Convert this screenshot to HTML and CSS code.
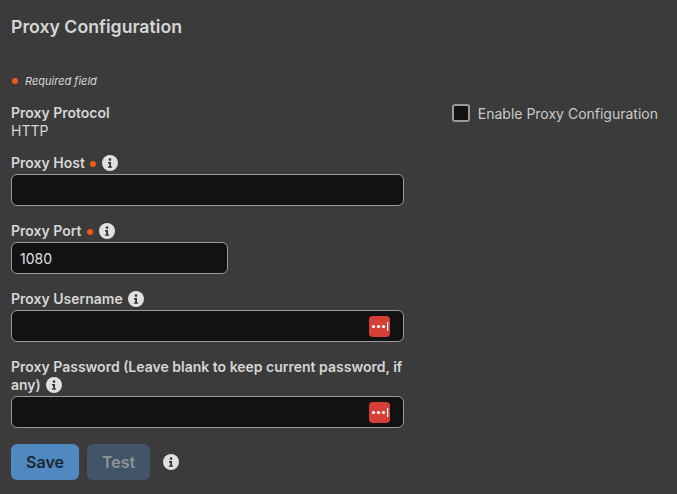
FILE: index.html
```html
<!DOCTYPE html>
<html lang="en">
<head>
    <meta charset="UTF-8">
    <title>Proxy Configuration</title>
    <link rel="stylesheet" href="styles.css">
</head>
<body>
    <svg class="icon-defs" width="0" height="0" aria-hidden="true">
        <symbol id="info" viewBox="0 0 16 16">
            <circle cx="8" cy="8" r="8" fill="#e0e0e0"/>
            <circle cx="8" cy="4.6" r="1.3" fill="#333"/>
            <path d="M6 7h3v4.4h1.1v1.4H5.9v-1.4h1.3V8.4H6z" fill="#333"/>
        </symbol>
        <symbol id="pw" viewBox="0 0 21 21">
            <rect width="21" height="21" rx="4" fill="#d63f35"/>
            <circle cx="4.5" cy="10.5" r="1.6" fill="#fff"/>
            <circle cx="9.5" cy="10.5" r="1.6" fill="#fff"/>
            <circle cx="14.5" cy="10.5" r="1.6" fill="#fff"/>
            <rect x="18" y="6" width="1.2" height="9" fill="#fff"/>
        </symbol>
    </svg>

    <h1 class="title">Proxy Configuration</h1>
    <p class="required-note"><span class="dot"></span><em>Required field</em></p>

    <div class="layout">
        <form class="proxy-form">
            <div class="protocol">
                <div class="label-row">Proxy Protocol</div>
                <div class="protocol-value">HTTP</div>
            </div>

            <div class="field">
                <label class="label-row">Proxy Host <span class="dot dot-label"></span><svg class="info"><use href="#info"/></svg></label>
                <input class="text-input" type="text">
            </div>

            <div class="field">
                <label class="label-row">Proxy Port <span class="dot dot-label"></span><svg class="info"><use href="#info"/></svg></label>
                <input class="text-input port" type="text" value="1080">
            </div>

            <div class="field">
                <label class="label-row">Proxy Username <svg class="info"><use href="#info"/></svg></label>
                <div class="input-wrap">
                    <input class="text-input" type="text">
                    <svg class="pw-badge"><use href="#pw"/></svg>
                </div>
            </div>

            <div class="field">
                <label class="label-row">Proxy Password (Leave blank to keep current password, if any) <svg class="info"><use href="#info"/></svg></label>
                <div class="input-wrap">
                    <input class="text-input" type="password">
                    <svg class="pw-badge"><use href="#pw"/></svg>
                </div>
            </div>

            <div class="actions">
                <button class="btn btn-save" type="button">Save</button>
                <button class="btn btn-test" type="button">Test</button>
                <svg class="info info-actions"><use href="#info"/></svg>
            </div>
        </form>

        <label class="enable">
            <span class="checkbox"></span>
            <span class="enable-text">Enable Proxy Configuration</span>
        </label>
    </div>
</body>
</html>
```

FILE: styles.css
```css
html, body {
    height: 100%;
}

body {
    font-family: Inter, "Liberation Sans", sans-serif;
    margin: 0;
    padding: 0 11px;
    background-color: #3b3b3b;
    color: #d6d6d6;
    font-size: 14px;
    overflow: hidden;
    box-sizing: border-box;
}

.icon-defs {
    display: block;
    height: 0;
}

.title {
    margin: 0;
    padding-top: 16px;
    font-size: 17.7px;
    line-height: 22px;
    font-weight: 600;
}

.required-note {
    margin: 36px 0 0;
    display: flex;
    align-items: center;
    font-size: 11px;
    line-height: 14px;
    height: 14px;
}

.required-note em {
    margin-left: 7px;
}

.dot {
    display: inline-block;
    width: 6px;
    height: 6px;
    margin-left: 1px;
    border-radius: 50%;
    background-color: #f05a14;
}

.dot-label {
    margin-left: 2px;
    margin-right: 4px;
    vertical-align: 1px;
}

.layout {
    display: flex;
    justify-content: space-between;
    margin-top: 16px;
}

.proxy-form {
    width: 393px;
}

.label-row {
    display: block;
    font-weight: 600;
    line-height: 18px;
}

.protocol-value {
    line-height: 18px;
}

.field {
    margin-top: 16px;
}

.protocol + .field {
    margin-top: 14px;
}

.info {
    display: inline-block;
    width: 16px;
    height: 16px;
    margin: 1px 0 0 2px;
    vertical-align: top;
}

.text-input {
    display: block;
    width: 100%;
    height: 32px;
    margin-top: 2px;
    padding: 0 8px;
    box-sizing: border-box;
    background-color: #121212;
    border: 1px solid #9a9a9a;
    border-radius: 6px;
    color: #e0e0e0;
    font-family: inherit;
    font-size: 14px;
}

.port {
    width: 217px;
}

.input-wrap {
    position: relative;
}

.pw-badge {
    position: absolute;
    top: 6px;
    right: 14px;
    width: 21px;
    height: 21px;
}

.actions {
    display: flex;
    align-items: center;
    margin-top: 16px;
}

.btn {
    height: 36px;
    padding: 0;
    border: none;
    border-radius: 6px;
    font-family: inherit;
    font-size: 16px;
    font-weight: 600;
}

.btn-save {
    width: 68px;
    background-color: #5089bf;
    color: #1c2633;
}

.btn-test {
    width: 63px;
    margin-left: 8px;
    background-color: #425568;
    color: #8f9294;
}

.info-actions {
    margin: 0 0 0 13px;
}

.enable {
    display: flex;
    align-items: flex-start;
    margin-right: 8px;
    color: #c9c9c9;
    white-space: nowrap;
}

.enable-text {
    line-height: 20px;
}

.checkbox {
    width: 14px;
    height: 14px;
    margin-right: 8px;
    background-color: #121212;
    border: 2px solid #9a9a9a;
    border-radius: 3px;
}
```
